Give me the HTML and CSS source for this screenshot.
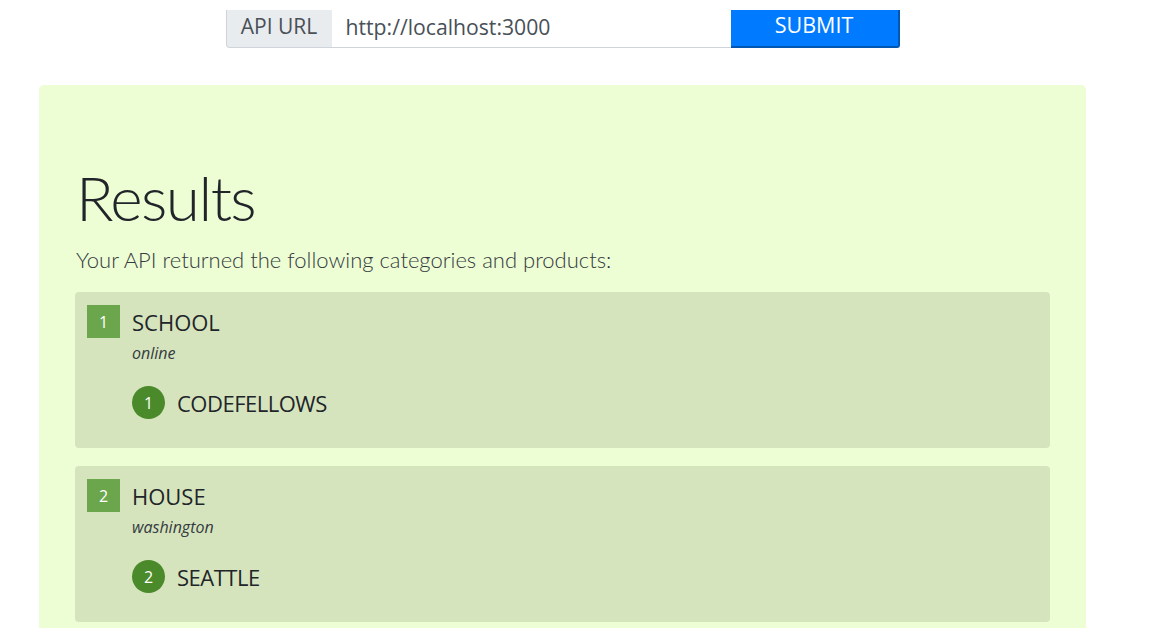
FILE: index.html
```html
<!DOCTYPE html>
<html lang="en">
<head>
<meta charset="utf-8">
<title>API Results</title>
<link rel="stylesheet" href="styles.css">
</head>
<body>
<div class="page">
  <form class="api-form">
    <span class="addon">API URL</span>
    <input class="url-input" type="text" value="http://localhost:3000">
    <button class="submit" type="button">SUBMIT</button>
  </form>

  <section class="jumbotron">
    <h1 class="title">Results</h1>
    <p class="lead">Your API returned the following categories and products:</p>

    <div class="category">
      <div class="cat-head">
        <span class="cat-num">1</span>
        <span class="cat-name">SCHOOL</span>
      </div>
      <div class="cat-desc">online</div>
      <ul class="products">
        <li class="product"><span class="prod-num">1</span><span class="prod-name">CODEFELLOWS</span></li>
      </ul>
    </div>

    <div class="category">
      <div class="cat-head">
        <span class="cat-num">2</span>
        <span class="cat-name">HOUSE</span>
      </div>
      <div class="cat-desc">washington</div>
      <ul class="products">
        <li class="product"><span class="prod-num">2</span><span class="prod-name">SEATTLE</span></li>
      </ul>
    </div>
  </section>
</div>
</body>
</html>
```

FILE: styles.css
```css
html, body {
  margin: 0;
  padding: 0;
  background: #ffffff;
}

body {
  font-family: "Open Sans", "Noto Sans", sans-serif;
  color: #212529;
  height: 642px;
  overflow: hidden;
}

.page {
  width: 1047px;
  margin-left: 39px;
  display: flex;
  flex-direction: column;
  align-items: center;
  padding-top: 10px;
}

.api-form {
  display: flex;
  width: 674px;
  height: 38px;
  margin: 0;
}

.addon {
  width: 106px;
  box-sizing: border-box;
  background: #e9ecef;
  border-left: 1px solid #ced4da;
  border-bottom: 1px solid #ced4da;
  border-bottom-left-radius: 4px;
  color: #495057;
  font-size: 21px;
  font-weight: 400;
  display: flex;
  align-items: center;
  justify-content: center;
  padding-bottom: 6px;
}

.url-input {
  width: 399px;
  box-sizing: border-box;
  border: none;
  border-bottom: 1px solid #ced4da;
  background: #fff;
  font-family: inherit;
  font-size: 21.2px;
  color: #495057;
  padding: 0 14px 5px;
  outline: none;
}

.submit {
  flex: 1;
  background: #007bff;
  border: none;
  border-right: 2px solid #0056b3;
  border-bottom: 2px solid #0056b3;
  border-bottom-right-radius: 3px;
  color: #fff;
  font-family: inherit;
  font-size: 21.5px;
  padding: 0 0 8px;
}

.jumbotron {
  align-self: stretch;
  margin-top: 37px;
  background: #edfdd4;
  border-radius: 5px 5px 0 0;
  padding: 75px 36px 6px;
}

.title {
  margin: 0;
  font-family: "Lato", "Open Sans", sans-serif;
  font-size: 62px;
  font-weight: 300;
  letter-spacing: -1.5px;
  line-height: 74px;
  padding-left: 1px;
}

.lead {
  margin: 10px 0 17px;
  font-family: "Lato", "Open Sans", sans-serif;
  font-size: 22px;
  font-weight: 300;
  line-height: 31px;
  padding-left: 1px;
  color: #343a40;
}

.category {
  background: #d6e4be;
  border-radius: 4px;
  padding: 13px 12px 29px;
  margin-bottom: 18px;
}

.category:last-child {
  margin-bottom: 0;
}

.cat-head {
  display: flex;
  align-items: center;
  gap: 12px;
  height: 33px;
}

.cat-num {
  width: 33px;
  height: 33px;
  background: #6ca64c;
  color: #fff;
  font-size: 16px;
  display: flex;
  align-items: center;
  justify-content: center;
}

.cat-name {
  font-size: 22px;
  font-weight: 400;
  line-height: 30px;
}

.cat-desc {
  margin-left: 45px;
  font-size: 16px;
  font-style: italic;
  color: #343a40;
  line-height: 22px;
  margin-top: 4px;
}

.products {
  list-style: none;
  margin: 22px 0 0 45px;
  padding: 0;
}

.product {
  display: flex;
  align-items: center;
  gap: 12px;
  height: 33px;
}

.prod-num {
  width: 33px;
  height: 33px;
  border-radius: 50%;
  background: #4b8a2b;
  color: #fff;
  font-size: 16px;
  display: flex;
  align-items: center;
  justify-content: center;
}

.prod-name {
  font-size: 22px;
  line-height: 30px;
  letter-spacing: -0.5px;
}
```
